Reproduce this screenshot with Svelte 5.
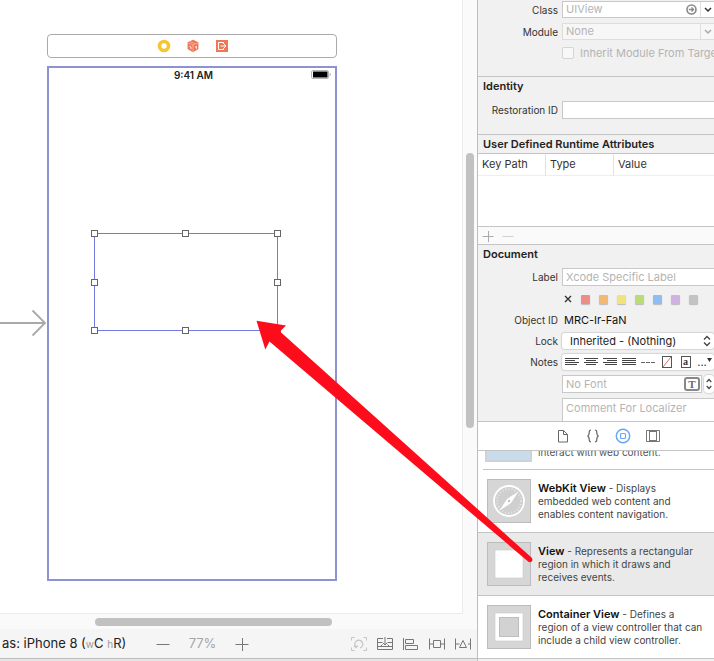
<!-- InterfaceBuilder.svelte -->

<script lang="ts">
  type LibraryItem = { name: string; text: string; icon: "webkit" | "view" | "container" };

  const library: LibraryItem[] = [
    { name: "WebKit View", text: "Displays\nembedded web content and\nenables content navigation.", icon: "webkit" },
    { name: "View", text: "Represents a rectangular\nregion in which it draws and\nreceives events.", icon: "view" },
    { name: "Container View", text: "Defines a\nregion of a view controller that can\ninclude a child view controller.", icon: "container" },
  ];

  const swatches = [
    { name: "Red", color: "#ec8d89" },
    { name: "Orange", color: "#f3b973" },
    { name: "Yellow", color: "#f1e27c" },
    { name: "Green", color: "#bbdb74" },
    { name: "Blue", color: "#8dbdf3" },
    { name: "Purple", color: "#cfb1e2" },
    { name: "Gray", color: "#c3c3c3" },
  ];

  const handles = ["nw", "n", "ne", "w", "e", "sw", "s", "se"];

  // left edge and length of each line in the alignment icons
  const aligns = [
    { name: "Align left", lines: [[0, 14], [0, 10], [0, 14], [0, 12]] },
    { name: "Align center", lines: [[0, 14], [2, 10], [0, 14], [2, 10]] },
    { name: "Align right", lines: [[0, 14], [4, 10], [0, 14], [2, 12]] },
    { name: "Justify", lines: [[0, 14], [0, 14], [0, 14], [0, 14]] },
  ];

  let selected = $state("View");
  let zoom = $state(77);
</script>

<div class="xcode">
  <main class="editor">
    <div class="stage">
      <div class="canvas">
        <div class="dock">
          <svg width="14" height="14" viewBox="0 0 14 14" role="img" aria-label="View Controller">
            <circle cx="7" cy="7" r="4.5" fill="#fff" stroke="#f4c636" stroke-width="3.6" />
          </svg>
          <svg width="14" height="14" viewBox="0 0 14 14" role="img" aria-label="First Responder">
            <path d="M7 .8 12.4 3.2V10L7 13.2 1.6 10V3.2Z" fill="#ee7653" />
            <path d="M1.8 3.6 7 6l5.2-2.4M7 6v7M4 2.5l5 2.3" fill="none" stroke="#f9bba5" stroke-width=".8" />
            <path d="M3.4 7.2 5 8v2.2M9 8.2l1.4-.8v2.4" fill="none" stroke="#fff" stroke-width=".9" />
          </svg>
          <svg width="14" height="14" viewBox="0 0 14 14" role="img" aria-label="Exit">
            <rect x="1" y="1" width="12" height="12" fill="#ef7753" />
            <path d="M8.6 5V3.5H3.5v7h5.1V9M5.5 7h5.5M9 5l2 2-2 2" fill="none" stroke="#fff" stroke-width="1" />
          </svg>
        </div>

        <div class="phone">
          <span class="clock">9:41 AM</span>
          <svg class="battery" width="20" height="9" viewBox="0 0 20 9" aria-hidden="true">
            <rect x=".5" y=".5" width="17" height="8" rx="1.5" fill="#fff" stroke="#b5b5b5" />
            <rect x="2" y="1.5" width="14.5" height="6" fill="#000" />
            <path d="M18.7 2.5 20 4.5 18.7 6.5Z" fill="#aaa" />
          </svg>
          <div class="subview">
            {#each handles as h}
              <i class="handle {h}"></i>
            {/each}
          </div>
        </div>

        <svg class="entry" width="47" height="28" viewBox="0 0 47 28" aria-hidden="true">
          <path d="M0 14H45M32.5 1.5 45 14 32.5 26.5" fill="none" stroke="#a9a9a9" stroke-width="1.8" />
        </svg>
      </div>
      <div class="vscroll"><div class="vthumb"></div></div>
    </div>
    <div class="hscroll"><div class="hthumb"></div></div>

    <footer class="bar">
      <span class="device">as: iPhone 8 (<small>w</small>C <small>h</small>R)</span>
      <div class="zoom">
        <button aria-label="Zoom out" onclick={() => zoom--}>
          <svg width="14" height="14" viewBox="0 0 14 14"><path d="M.5 7.5h13" stroke="#777" /></svg>
        </button>
        <span class="pct">{zoom}%</span>
        <button aria-label="Zoom in" onclick={() => zoom++}>
          <svg width="14" height="14" viewBox="0 0 14 14"><path d="M.5 7.5h13M7.5 1v13" stroke="#777" /></svg>
        </button>
      </div>
      <div class="tools">
        <button aria-label="Update frames">
          <svg width="16" height="14" viewBox="0 0 16 14" fill="none" stroke="#c4c4c4">
            <path d="M.5 3.5v-3h3M12.5.5h3v3M15.5 10.5v3h-3M3.5 13.5h-3v-3" />
            <path d="M5 10A4 4 0 1 1 9 11M7 8.5 5 10.5l-2-1.5" stroke-width="1.2" />
          </svg>
        </button>
        <button aria-label="Embed in stack">
          <svg width="16" height="14" viewBox="0 0 16 14" fill="none" stroke="#777">
            <path d="M6 1.5H.5v11h15v-11H10M.5 9.5h15M.5 5.5H5M11 5.5h4.5M8 0v8M5.5 5.5 8 8l2.5-2.5M3.5 9.5l2-2M12.5 9.5l-2-2" />
          </svg>
        </button>
        <button aria-label="Align">
          <svg width="16" height="14" viewBox="0 0 16 14" fill="none" stroke="#777">
            <path d="M.5 1v12M2.5 2.5h8v4h-8zM2.5 8.5h12v4h-12z" />
          </svg>
        </button>
        <button aria-label="Add constraints">
          <svg width="16" height="14" viewBox="0 0 16 14" fill="none" stroke="#777">
            <path d="M.5 1.5v11M15.5 1.5v11M4.5 3.5h7v7h-7zM.5 7h4M11.5 7h4" />
          </svg>
        </button>
        <button aria-label="Resolve issues">
          <svg width="16" height="14" viewBox="0 0 16 14" fill="none" stroke="#777">
            <path d="M.5 1.5v11M15.5 1.5v11M8 3.5 11.5 10.5h-7zM.5 7h4M13 7h2.5" />
          </svg>
        </button>
      </div>
    </footer>
  </main>

  <aside class="inspector">
    <section class="form custom">
      <label for="cls">Class</label>
      <div class="combo">
        <input id="cls" placeholder="UIView" />
        <button class="go" aria-label="Go to class">
          <svg width="11" height="11" viewBox="0 0 11 11">
            <circle cx="5.5" cy="5.5" r="4.5" fill="#fff" stroke="#888" stroke-width="1.6" />
            <path d="M2.8 5.5h4.5M5.5 3.4l2.1 2.1-2.1 2.1" fill="none" stroke="#888" stroke-width="1.3" />
          </svg>
        </button>
        <button class="drop" aria-label="Choose class">
          <svg width="8" height="6" viewBox="0 0 8 6"><path d="M1 1l3 3 3-3" fill="none" stroke="#333" stroke-width="1.5" /></svg>
        </button>
      </div>
      <label for="mod">Module</label>
      <div class="combo off">
        <input id="mod" placeholder="None" disabled />
        <button class="drop" aria-label="Choose module" disabled>
          <svg width="8" height="6" viewBox="0 0 8 6"><path d="M1 1l3 3 3-3" fill="none" stroke="#aaa" stroke-width="1.5" /></svg>
        </button>
      </div>
      <label class="check"><input type="checkbox" disabled />Inherit Module From Target</label>
    </section>

    <section class="identity">
      <h2>Identity</h2>
      <div class="form">
        <label for="rid">Restoration ID</label>
        <input id="rid" class="field" />
      </div>
    </section>

    <section class="attributes">
      <h2>User Defined Runtime Attributes</h2>
      <div class="rows">
        <table>
          <thead><tr><th class="key">Key Path</th><th class="type">Type</th><th>Value</th></tr></thead>
        </table>
      </div>
      <div class="addbar">
        <button aria-label="Add attribute">
          <svg width="12" height="12" viewBox="0 0 12 12"><path d="M.5 6.5h11M6.5 1v11" stroke="#aaa" /></svg>
        </button>
        <button aria-label="Remove attribute">
          <svg width="12" height="12" viewBox="0 0 12 12"><path d="M.5 6.5h11" stroke="#d0d0d0" /></svg>
        </button>
      </div>
    </section>

    <section class="document">
      <h2>Document</h2>
      <div class="form">
        <label for="lbl">Label</label>
        <input id="lbl" class="field" placeholder="Xcode Specific Label" />

        <div class="swatches">
          <button class="none" aria-label="No color">
            <svg width="8" height="8" viewBox="0 0 8 8"><path d="M1 1l6 6M7 1 1 7" stroke="#333" stroke-width="1.4" /></svg>
          </button>
          {#each swatches as s}
            <button class="swatch" aria-label={s.name} style="background:{s.color}"></button>
          {/each}
        </div>

        <span class="name">Object ID</span>
        <span class="value">MRC-Ir-FaN</span>

        <label for="lock">Lock</label>
        <div class="popup">
          <select id="lock"><option>Inherited - (Nothing)</option></select>
          <svg width="8" height="12" viewBox="0 0 8 12" aria-hidden="true">
            <path d="M1 4.5l3-3 3 3M1 7.5l3 3 3-3" fill="none" stroke="#444" stroke-width="1.3" />
          </svg>
        </div>

        <span class="name">Notes</span>
        <div class="notes">
          {#each aligns as a}
            <button aria-label={a.name}>
              <svg width="14" height="10" viewBox="0 0 14 10">
                {#each a.lines as [x, w], i}
                  <rect {x} y={i * 2 + 1} width={w} height="1" fill="#444" />
                {/each}
              </svg>
            </button>
          {/each}
          <button aria-label="Natural alignment">
            <svg width="14" height="10" viewBox="0 0 14 10"><path d="M0 5.5h4M5 5.5h4M10 5.5h4" stroke="#666" /></svg>
          </button>
          <button aria-label="Text color">
            <svg width="10" height="12" viewBox="0 0 10 12">
              <rect x=".5" y=".5" width="9" height="11" fill="#fff" stroke="#555" />
              <path d="M1 11 9 1" stroke="#e06a62" />
            </svg>
          </button>
          <button class="glyph" aria-label="Background color"><span>a</span></button>
          <button class="more" aria-label="More">...<svg width="5" height="4" viewBox="0 0 5 4"><path d="M0 0h5L2.5 4Z" fill="#333" /></svg></button>
        </div>

        <div class="fontrow">
          <input class="field" aria-label="Font" placeholder="No Font" />
          <button class="pick" aria-label="Choose font">T</button>
          <button class="step" aria-label="Font size">
            <svg width="6" height="12" viewBox="0 0 6 12"><path d="M.7 4 3 1.5 5.3 4M.7 8 3 10.5 5.3 8" fill="none" stroke="#444" stroke-width="1.2" /></svg>
          </button>
        </div>

        <textarea aria-label="Comment" placeholder="Comment For Localizer"></textarea>
      </div>
    </section>

    <nav class="tabs" aria-label="Library">
      <button aria-label="File templates">
        <svg width="12" height="14" viewBox="0 0 12 14" fill="none" stroke="#666">
          <path d="M1.5 1.5h5l4 4v7.5h-9zM6.5 1.5v4h4" />
        </svg>
      </button>
      <button aria-label="Code snippets">
        <svg width="14" height="14" viewBox="0 0 14 14" fill="none" stroke="#666" stroke-width="1.2">
          <path d="M5 1C3.2 1 3.2 1.8 3.2 3.4 3.2 5.6 3 6.6 1.4 7 3 7.4 3.2 8.4 3.2 10.6 3.2 12.2 3.2 13 5 13M9 1c1.8 0 1.8.8 1.8 2.4C10.8 5.6 11 6.6 12.6 7 11 7.4 10.8 8.4 10.8 10.6 10.8 12.2 10.8 13 9 13" />
        </svg>
      </button>
      <button aria-label="Objects">
        <svg width="16" height="16" viewBox="0 0 16 16" fill="none" stroke="#6ba6f2">
          <circle cx="8" cy="8" r="6.7" stroke-width="1.5" />
          <rect x="5.5" y="5.5" width="5" height="5" rx="1" stroke-width="1.2" />
        </svg>
      </button>
      <button aria-label="Media">
        <svg width="14" height="12" viewBox="0 0 14 12" fill="none" stroke="#777">
          <path d="M.5.5h13v11H.5zM3.5.5v11M10.5.5v11M3.5 1.5h7M3.5 10.5h7" />
        </svg>
      </button>
    </nav>

    <div class="library">
      <div class="cut">
        <span class="thumb"></span>
        <p>interact with web content.</p>
      </div>
      {#each library as item}
        <button class="item" class:selected={selected === item.name} onclick={() => (selected = item.name)}>
          <svg width="44" height="44" viewBox="0 0 44 44" aria-hidden="true">
            <rect x=".5" y=".5" width="43" height="43" fill="#d6d6d6" stroke="#bcbcbc" />
            {#if item.icon === "webkit"}
              <circle cx="22" cy="22" r="15" fill="#cfcfcf" stroke="#fff" stroke-width="1.8" />
              <circle cx="22" cy="22" r="12" fill="none" stroke="#eee" stroke-width="2" stroke-dasharray=".8 2.3" />
              <path d="M31.5 12.5 24 24 12.5 31.5 20 20Z" fill="#fff" />
              <circle cx="22" cy="22" r="1.2" fill="#c0c0c0" />
            {:else}
              <rect x="8" y="8" width="28" height="28" fill="#fff" stroke="#cacaca" stroke-width=".6" />
              {#if item.icon === "container"}
                <rect x="12.5" y="12.5" width="19" height="19" fill="#d2d2d2" stroke="#bdbdbd" />
              {/if}
            {/if}
          </svg>
          <span class="desc"><b>{item.name}</b> - {item.text}</span>
        </button>
      {/each}
    </div>
  </aside>

  <!-- drag arrow from the library item to the canvas -->
  <svg class="drag" width="714" height="661" viewBox="0 0 714 661" aria-hidden="true">
    <path d="M256.5 320.8 286 325.6 280 331.5 531.5 557.5Q533.5 560 531.5 561.8 529.5 563 527.5 561L269.5 341.5 265.3 349.5Z" fill="#fd0d1b" />
  </svg>
</div>

<style>
  :global(body) { margin: 0; }

  .xcode {
    position: relative; display: grid; grid-template-columns: minmax(0, 1fr) 237px;
    min-height: 100vh; overflow: hidden; background: #e6e6e6;
    font: 11px/13px Inter, "Liberation Sans", sans-serif; color: #333;
  }
  button { padding: 0; border: 0; background: none; font: inherit; color: inherit; display: flex; align-items: center; justify-content: center; }
  svg { display: block; flex-shrink: 0; }
  input, select, textarea { box-sizing: border-box; margin: 0; font: inherit; color: #222; border-radius: 0; outline: none; }
  ::placeholder { color: #b4b4b4; opacity: 1; }

  /* editor */
  .editor { display: flex; flex-direction: column; padding-bottom: 2px; }
  .stage { flex: 1; display: flex; }
  .canvas { position: relative; flex: 1; padding: 34px 0 30px 47px; background: #fff; border-right: 1px solid #ececec; border-bottom: 1px solid #ececec; }
  .dock { box-sizing: border-box; width: 290px; height: 24px; padding-left: 2px; border: 1px solid #aaa; border-radius: 4px; display: flex; align-items: center; justify-content: center; gap: 15px; }
  .phone { position: relative; box-sizing: border-box; width: 290px; height: 515px; margin-top: 8px; border: 2px solid #8d92d0; text-align: center; }
  .clock { display: block; padding: 1px 0 0 3px; font-size: 10px; font-weight: 600; color: #222; }
  .battery { position: absolute; top: 2px; right: 4px; }
  .entry { position: absolute; left: 0; top: 309px; }

  .subview { position: absolute; left: 45px; top: 165px; width: 182px; height: 96px; border: 1px solid #7479e0; }
  .handle { position: absolute; width: 5px; height: 5px; margin: -4px; border: 1px solid #666; background: #fff; }
  .nw, .n, .ne { top: 0; }
  .w, .e { top: 50%; margin-top: -3px; }
  .sw, .s, .se { top: 100%; margin-top: -3px; }
  .nw, .w, .sw { left: 0; }
  .n, .s { left: 50%; }
  .ne, .e, .se { left: 100%; margin-left: -3px; }

  .vscroll { width: 14px; padding: 153px 0 0 3px; box-sizing: border-box; background: #fafafa; }
  .vthumb { width: 8px; height: 275px; border-radius: 4px; background: #c1c1c1; }
  .hscroll { height: 15px; padding: 4px 0 0 95px; box-sizing: border-box; background: #fafafa; }
  .hthumb { width: 237px; height: 8px; border-radius: 4px; background: #c1c1c1; }

  .bar { display: flex; align-items: center; height: 29px; padding: 0 6px 0 2px; background: #f5f5f5; border-bottom: 1px solid #bdbdbd; }
  .device { width: 154px; font-size: 13px; white-space: nowrap; color: #222; }
  .device small { font-size: 10px; color: #999; }
  .zoom { display: flex; align-items: center; gap: 16px; }
  .pct { width: 33px; text-align: center; font-size: 13px; color: #a5a5a5; }
  .tools { display: flex; gap: 10px; margin-left: auto; }

  /* inspector */
  .inspector { min-width: 0; overflow: hidden; background: #f1f1f1; border-left: 1px solid #bdbdbd; }
  section { border-bottom: 1px solid #c4c4c4; }
  h2 { margin: 0; padding: 0 5px; font-size: 11px; line-height: 18px; font-weight: 600; color: #222; }
  .form { display: grid; grid-template-columns: 80px minmax(0, 1fr); column-gap: 4px; row-gap: 5px; align-items: center; }
  .form > label, .name { text-align: right; white-space: nowrap; font-size: 10px; line-height: 16px; }
  .value { padding-left: 2px; line-height: 16px; color: #111; }

  .field, .combo { box-sizing: border-box; width: 100%; height: 18px; border: 1px solid #c8c8c8; background: #fff; }
  .field { border-right: 0; padding: 0 3px; }
  .custom { padding: 1px 0 16px; }
  .combo { display: flex; height: 17px; border-right: 0; }
  .combo input { flex: 1; min-width: 0; border: 0; padding: 0 3px; background: none; }
  .combo .go { width: 18px; }
  .combo .drop { width: 14px; border-left: 1px solid #e0e0e0; }
  .combo.off { border-color: #ddd; background: #f7f7f7; }
  .form > .check { grid-column: 2; display: flex; align-items: center; gap: 6px; height: 15px; text-align: left; font-size: 11px; color: #b4b4b4; }
  .check input { appearance: none; flex-shrink: 0; width: 12px; height: 12px; border: 1px solid #d5d5d5; border-radius: 2px; background: #f8f8f8; }

  .identity { padding-bottom: 15px; }
  .identity .form { padding-top: 6px; }

  .rows { height: 72px; border-top: 1px solid #c4c4c4; border-bottom: 1px solid #c4c4c4; background: #fff; }
  table { width: 100%; border-spacing: 0; table-layout: fixed; }
  th { box-sizing: border-box; height: 22px; padding: 0 4px; border-bottom: 1px solid #eee; border-left: 1px solid #e2e2e2; font-weight: 400; text-align: left; }
  th:first-child { border-left: 0; }
  .key { width: 67px; }
  .type { width: 68px; }
  .addbar { display: flex; align-items: center; gap: 8px; height: 17px; padding-left: 4px; background: #fafafa; }

  .document .form { padding-top: 5px; }
  .swatches { grid-column: 2; display: flex; align-items: center; gap: 9px; height: 16px; padding-left: 2px; }
  .none { width: 8px; height: 8px; }
  .swatch { width: 9px; height: 9px; border-radius: 1px; box-shadow: 0 1px 1px #bbb; }
  .popup { position: relative; height: 16px; border-radius: 3px; background: #fff; box-shadow: 0 0 1px 1px #d4d4d4; }
  .popup select { appearance: none; width: 100%; height: 16px; padding: 0 8px; border: 0; background: none; }
  .popup svg { position: absolute; right: 3px; top: 2px; pointer-events: none; }
  .notes { display: flex; height: 16px; border-radius: 3px; background: #fff; box-shadow: 0 0 1px 1px #d4d4d4; }
  .notes button { width: 19px; flex-shrink: 0; }
  .glyph span { width: 8px; border: 1px solid #555; font: bold 10px/10px "Liberation Serif", serif; }
  .more svg { align-self: flex-start; margin-top: 4px; }
  .fontrow { grid-column: 2; position: relative; display: flex; gap: 2px; }
  .fontrow .field { flex: 1; min-width: 0; border-right: 1px solid #c8c8c8; }
  .pick { position: absolute; right: 14px; top: 2px; box-sizing: border-box; width: 16px; height: 14px; border: 2px solid #888; border-radius: 3px; font: bold 11px/10px "Liberation Serif", serif; color: #666; }
  .step { width: 10px; border-radius: 4px; background: #fff; box-shadow: 0 0 1px 1px #d4d4d4; }
  textarea { grid-column: 2; display: block; width: 100%; height: 23px; padding: 3px; border: 1px solid #c8c8c8; border-width: 1px 0 0 1px; resize: none; overflow: hidden; }

  .tabs { display: flex; height: 28px; padding-left: 70px; border-bottom: 1px solid #c4c4c4; background: #fff; }
  .tabs button { width: 30px; }

  .library { background: #fff; font-size: 10px; }
  .cut { display: flex; align-items: flex-end; gap: 6px; height: 18px; margin-left: 5px; padding-left: 2px; border-bottom: 1px solid #c4c4c4; overflow: hidden; }
  .cut p { margin: -5px 0 0; align-self: flex-start; color: #555; }
  .thumb { box-sizing: border-box; width: 47px; height: 12px; margin-bottom: 7px; border: 2px solid #ccd3da; border-top: 0; background: #c8dcec; }
  .item { box-sizing: border-box; width: 100%; height: 63px; padding: 0 4px 0 9px; border-bottom: 1px solid #c4c4c4; justify-content: flex-start; gap: 7px; text-align: left; }
  .item.selected { background: #eaeaea; }
  .desc { white-space: pre-line; color: #444; }
  .desc b { font-size: 11px; font-weight: 600; color: #111; }

  .drag { position: absolute; left: 0; top: 0; pointer-events: none; }
</style>
